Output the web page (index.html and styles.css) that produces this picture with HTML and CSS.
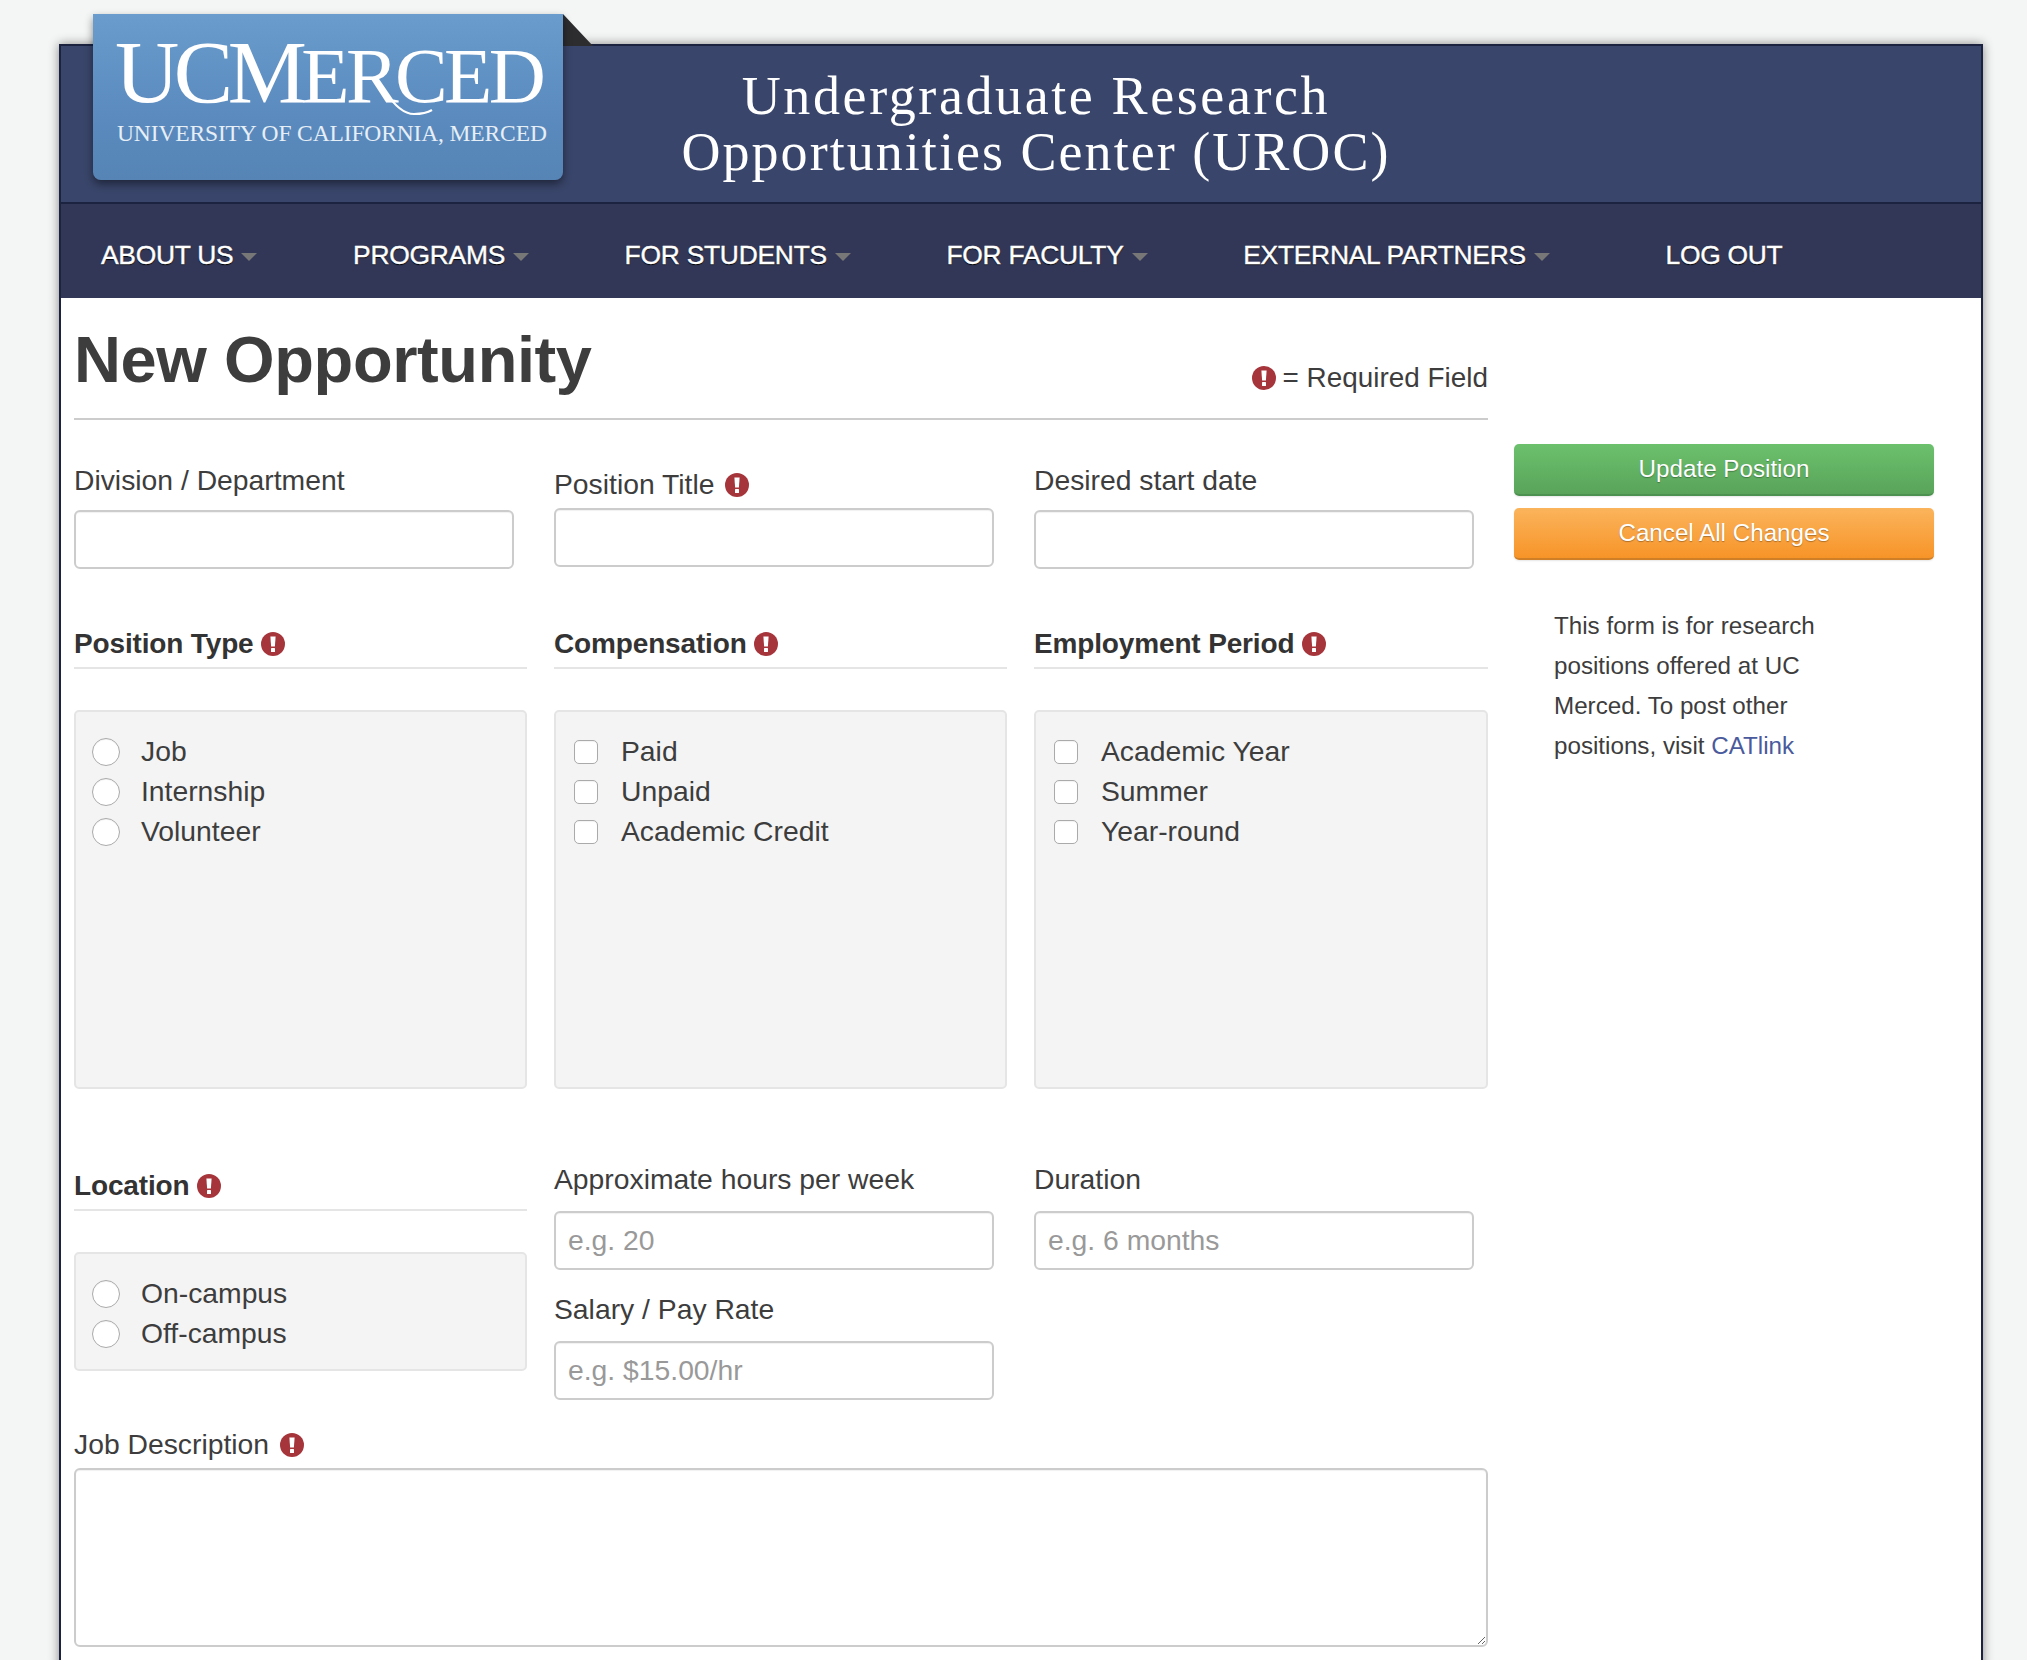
FILE: index.html
```html
<!DOCTYPE html>
<html lang="en">
<head>
<meta charset="utf-8">
<title>New Opportunity</title>
<link rel="stylesheet" href="styles.css">
</head>
<body>
<svg class="defs" width="0" height="0" aria-hidden="true">
  <symbol id="req" viewBox="0 0 24 24">
    <circle cx="12" cy="12" r="12" fill="#a6353b"/>
    <path d="M9.4 4.5h5.2l-.7 10h-3.8z" fill="#fff"/>
    <rect x="10" y="16" width="4" height="4" rx=".6" fill="#fff"/>
  </symbol>
</svg>
<div class="wrap">
  <div class="logo">
    <div class="logo-main"><span class="lg">UCM</span><span class="sm">ERCED</span></div>
    <div class="logo-sub">UNIVERSITY OF CALIFORNIA, MERCED</div>
    <svg class="swash" width="60" height="30" viewBox="0 0 60 30"><path d="M1 1C8 12 18 24 30 24c7 0 13-1 18-4" fill="none" stroke="#fff" stroke-width="2.2"/></svg>
  </div>
  <div class="logo-fold"></div>
  <header class="masthead">
    <h1 class="site-title"><span class="title-a">Undergraduate Research</span><br><span class="title-b">Opportunities Center (UROC)</span></h1>
  </header>
  <nav class="nav">
    <a class="nav-item">ABOUT US<i class="caret"></i></a>
    <a class="nav-item">PROGRAMS<i class="caret"></i></a>
    <a class="nav-item">FOR STUDENTS<i class="caret"></i></a>
    <a class="nav-item">FOR FACULTY<i class="caret"></i></a>
    <a class="nav-item">EXTERNAL PARTNERS<i class="caret"></i></a>
    <a class="nav-item nav-last">LOG OUT</a>
  </nav>
  <div class="content">
    <main class="main">
      <div class="page-head">
        <h2 class="page-title">New Opportunity</h2>
        <div class="legend"><svg class="req"><use href="#req"/></svg> = Required Field</div>
      </div>

      <div class="row row-top">
        <div class="field">
          <label class="label">Division / Department</label>
          <input class="input" type="text">
        </div>
        <div class="field field-req">
          <label class="label">Position Title <svg class="req"><use href="#req"/></svg></label>
          <input class="input" type="text">
        </div>
        <div class="field">
          <label class="label">Desired start date</label>
          <input class="input" type="text">
        </div>
      </div>

      <div class="row row-groups">
        <section class="group">
          <h3 class="group-title">Position Type <svg class="req"><use href="#req"/></svg></h3>
          <div class="panel panel-tall">
            <label class="opt"><input class="radio" type="radio" name="t">Job</label>
            <label class="opt"><input class="radio" type="radio" name="t">Internship</label>
            <label class="opt"><input class="radio" type="radio" name="t">Volunteer</label>
          </div>
        </section>
        <section class="group">
          <h3 class="group-title">Compensation <svg class="req"><use href="#req"/></svg></h3>
          <div class="panel panel-tall">
            <label class="opt"><input class="check" type="checkbox">Paid</label>
            <label class="opt"><input class="check" type="checkbox">Unpaid</label>
            <label class="opt"><input class="check" type="checkbox">Academic Credit</label>
          </div>
        </section>
        <section class="group">
          <h3 class="group-title">Employment Period <svg class="req"><use href="#req"/></svg></h3>
          <div class="panel panel-tall">
            <label class="opt"><input class="check" type="checkbox">Academic Year</label>
            <label class="opt"><input class="check" type="checkbox">Summer</label>
            <label class="opt"><input class="check" type="checkbox">Year-round</label>
          </div>
        </section>
      </div>

      <div class="row row-lower">
        <section class="group group-loc">
          <h3 class="group-title">Location <svg class="req"><use href="#req"/></svg></h3>
          <div class="panel">
            <label class="opt"><input class="radio" type="radio" name="l">On-campus</label>
            <label class="opt"><input class="radio" type="radio" name="l">Off-campus</label>
          </div>
        </section>
        <div class="stack">
          <div class="field">
            <label class="label">Approximate hours per week</label>
            <input class="input" type="text" placeholder="e.g. 20">
          </div>
          <div class="field">
            <label class="label">Salary / Pay Rate</label>
            <input class="input" type="text" placeholder="e.g. $15.00/hr">
          </div>
        </div>
        <div class="stack">
          <div class="field">
            <label class="label">Duration</label>
            <input class="input" type="text" placeholder="e.g. 6 months">
          </div>
        </div>
      </div>

      <div class="field field-desc">
        <label class="label">Job Description <svg class="req"><use href="#req"/></svg></label>
        <textarea class="textarea"></textarea>
      </div>
    </main>
    <aside class="side">
      <button class="btn btn-green" type="button">Update Position</button>
      <button class="btn btn-orange" type="button">Cancel All Changes</button>
      <p class="note">This form is for research positions offered at UC Merced. To post other positions, visit <a class="link">CATlink</a></p>
    </aside>
  </div>
</div>
</body>
</html>
```
FILE: styles.css
```css
* { box-sizing: border-box; }
html, body { margin: 0; height: 1660px; overflow: hidden; }
body {
  background: #f4f6f5;
  padding: 44px 44px 0 59px;
  font-family: "Liberation Sans", Arial, sans-serif;
  font-size: 28.3px;
  color: #3d3d3d;
}
.defs { position: absolute; }
.wrap {
  position: relative;
  width: 1924px;
  height: 1700px;
  background: #fff;
  border: 2px solid #1b2340;
  box-shadow: 0 0 10px rgba(0,0,0,.45);
}

/* logo */
.logo {
  position: absolute;
  left: 32px;
  top: -32px;
  width: 470px;
  height: 166px;
  padding: 25px 0 0 22px;
  background: linear-gradient(#6a9ccd, #5b8bbf 60%, #5584b5);
  border-radius: 0 0 8px 8px;
  box-shadow: 0 4px 8px rgba(0,0,0,.45);
  color: #fff;
  font-family: "Liberation Serif", serif;
  z-index: 2;
}
.logo-main { line-height: 66px; white-space: nowrap; height: 66px; }
.logo-main .lg { font-size: 89px; letter-spacing: -5.5px; }
.logo-main .sm { font-size: 79px; letter-spacing: -3.6px; }
.logo-sub { margin-top: 14px; margin-left: 2px; font-size: 23.5px; line-height: 28px; white-space: nowrap; color: #e6eef6; letter-spacing: -.13px; }
.swash { position: absolute; left: 291px; top: 76px; }
.logo-fold {
  position: absolute;
  left: 502px;
  top: -32px;
  width: 0;
  height: 0;
  border-style: solid;
  border-width: 32px 0 0 30px;
  border-color: transparent transparent transparent #2d2d2f;
}

/* masthead */
.masthead {
  height: 158px;
  background: #39456a;
  border-bottom: 2px solid #1b2340;
  padding: 22px 0 0 465px;
}
.site-title {
  margin: 0;
  width: 1020px;
  text-align: center;
  font-family: "Liberation Serif", serif;
  font-weight: 400;
  font-size: 54px;
  line-height: 56px;
  color: #fff;
}
.title-a { letter-spacing: 2.6px; }
.title-b { letter-spacing: 2.04px; }

/* nav */
.nav {
  display: flex;
  align-items: center;
  gap: 95.6px;
  height: 94px;
  padding: 8px 0 0 40px;
  background: #323757;
}
.nav-item {
  display: flex;
  align-items: center;
  gap: 8px;
  color: #fff;
  font-size: 26.4px;
  letter-spacing: -.25px;
  text-shadow: 0 1px 1px #000;
  -webkit-text-stroke: .4px #fff;
  white-space: nowrap;
}
.nav-last { margin-left: 20px; }
.caret {
  display: block;
  width: 0;
  height: 0;
  margin-top: 3px;
  border-style: solid;
  border-width: 8px 8px 0;
  border-color: #777 transparent transparent;
}

/* content */
.content { display: flex; gap: 26px; padding-left: 13px; }
.main { width: 1414px; flex: none; }
.page-head {
  display: flex;
  justify-content: space-between;
  height: 122px;
  border-bottom: 2px solid #ccc;
}
.page-title {
  margin: 22px 0 0;
  font-size: 65px;
  line-height: 80px;
  font-weight: 700;
  color: #3d3d3d;
  letter-spacing: -.4px;
}
.legend { margin-top: 62px; height: 36px; font-size: 27.9px; line-height: 36px; display: flex; align-items: center; gap: 7px; }
.req { width: 24px; height: 24px; vertical-align: -3px; flex: none; }
.label .req { margin-left: 3px; }

.row { display: grid; grid-template-columns: 453px 453px 454px; column-gap: 27px; }
.field { width: 440px; }
.label { display: block; line-height: 36px; white-space: nowrap; }
.input {
  display: block;
  width: 100%;
  height: 59px;
  padding: 0 12px;
  border: 2px solid #ccc;
  border-radius: 6px;
  background: #fff;
  font: inherit;
  color: inherit;
  box-shadow: inset 0 1px 1px rgba(0,0,0,.06);
  outline: none;
}
.input::placeholder { color: #999; opacity: 1; }

.row-top { padding-top: 42px; }
.row-top .label { height: 48px; }
.field-req .label { height: 46px; padding-top: 4px; }

.row-groups { margin-top: 56px; }
.group-title {
  margin: 0;
  height: 44px;
  padding-top: 1px;
  font-size: 28px;
  line-height: 36px;
  font-weight: 700;
  color: #333;
  border-bottom: 2px solid #e5e5e5;
  letter-spacing: -.15px;
}
.panel {
  margin-top: 41px;
  padding: 19px 16px 0;
  min-height: 119px;
  background: #f4f4f4;
  border: 2px solid #e5e5e5;
  border-radius: 5px;
}
.panel-tall { height: 379px; }
.opt { display: flex; align-items: center; height: 40px; line-height: 40px; white-space: nowrap; }
.radio, .check {
  appearance: none;
  flex: none;
  background: #fff;
  border: 1px solid #aaa;
  box-shadow: inset 0 1px 1px rgba(0,0,0,.05);
}
.radio { width: 28px; height: 28px; border-radius: 50%; margin: 2px 21px 0 0; }
.check { width: 24px; height: 24px; border-radius: 5px; margin: 2px 23px 0 2px; }

.row-lower { margin-top: 75px; }
.group-loc { padding-top: 3px; }
.stack { display: flex; flex-direction: column; gap: 24px; }
.stack .label { height: 47px; line-height: 30px; }
.field-desc { width: 100%; margin-top: 26px; }
.field-desc .label { height: 42px; }
.textarea {
  display: block;
  width: 100%;
  height: 179px;
  border: 2px solid #ccc;
  border-radius: 6px;
  background: #fff;
  font: inherit;
  outline: none;
  box-shadow: inset 0 1px 1px rgba(0,0,0,.06);
}

/* sidebar */
.side { width: 420px; padding-top: 146px; }
.btn {
  display: block;
  width: 100%;
  height: 52px;
  margin-bottom: 12px;
  padding: 0;
  border: 0;
  border-radius: 5px;
  color: #fff;
  font: inherit;
  font-size: 24.2px;
  text-shadow: 0 1px 1px rgba(0,0,0,.3);
}
.btn-green { background: linear-gradient(#6cc16d, #59a45a); border-bottom: 2px solid #4d9150; box-shadow: 0 1px 2px rgba(0,0,0,.1); }
.btn-orange { background: linear-gradient(#fbb45c, #f79428); border-bottom: 2px solid #d17f26; box-shadow: 0 1px 2px rgba(0,0,0,.1); }
.note {
  margin: 46px 0 0;
  padding: 0 100px 0 40px;
  font-size: 24.2px;
  line-height: 40px;
  color: #3d3d3d;
}
.link { color: #4a5a9c; }
```
